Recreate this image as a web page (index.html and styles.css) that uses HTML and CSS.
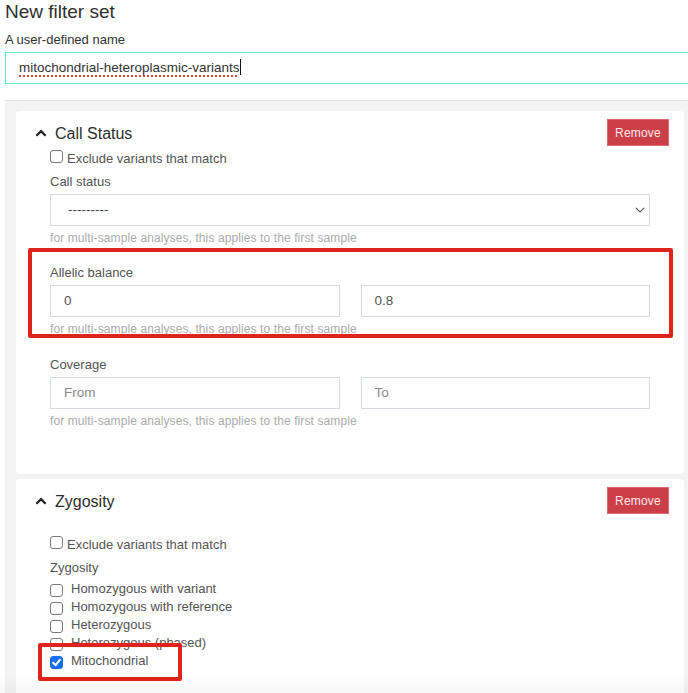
FILE: index.html
```html
<!DOCTYPE html>
<html lang="en">
<head>
<meta charset="utf-8">
<title>New filter set</title>
<link rel="stylesheet" href="styles.css">
</head>
<body>
<div class="page">
  <h1 class="title">New filter set</h1>
  <div class="name-label">A user-defined name</div>
  <div class="name-input"><span class="spell">mitochondrial-heteroplasmic-variants</span><span class="caret"></span></div>

  <div class="panel">
    <section class="card card-status">
      <div class="card-head">
        <svg class="chev" width="12" height="8" viewBox="0 0 12 8"><polyline points="1.4,6.8 6,2.2 10.6,6.8" fill="none" stroke="#222" stroke-width="2.3"/></svg>
        <h2 class="card-title">Call Status</h2>
        <button class="remove" type="button">Remove</button>
      </div>
      <div class="card-body">
        <div class="check exclude exclude-top"><span class="box"></span><span>Exclude variants that match</span></div>

        <div class="group group-1">
          <div class="flabel">Call status</div>
          <div class="field select">
            <span>---------</span>
            <svg class="select-chev" width="10" height="6" viewBox="0 0 10 6"><polyline points="0.8,0.8 5,5 9.2,0.8" fill="none" stroke="#555" stroke-width="1.2"/></svg>
          </div>
          <div class="help">for multi-sample analyses, this applies to the first sample</div>
        </div>

        <div class="group group-2">
          <div class="flabel">Allelic balance</div>
          <div class="pair">
            <div class="field value">0</div>
            <div class="field value">0.8</div>
          </div>
          <div class="help">for multi-sample analyses, this applies to the first sample</div>
        </div>

        <div class="group group-3">
          <div class="flabel">Coverage</div>
          <div class="pair">
            <div class="field placeholder">From</div>
            <div class="field placeholder">To</div>
          </div>
          <div class="help">for multi-sample analyses, this applies to the first sample</div>
        </div>
      </div>
    </section>

    <section class="card card-zyg">
      <div class="card-head">
        <svg class="chev" width="12" height="8" viewBox="0 0 12 8"><polyline points="1.4,6.8 6,2.2 10.6,6.8" fill="none" stroke="#222" stroke-width="2.3"/></svg>
        <h2 class="card-title">Zygosity</h2>
        <button class="remove" type="button">Remove</button>
      </div>
      <div class="card-body">
        <div class="check exclude exclude-zyg"><span class="box"></span><span>Exclude variants that match</span></div>
        <div class="flabel zyg-label">Zygosity</div>
        <div class="options">
          <div class="check opt"><span class="box"></span><span>Homozygous with variant</span></div>
          <div class="check opt"><span class="box"></span><span>Homozygous with reference</span></div>
          <div class="check opt"><span class="box"></span><span>Heterozygous</span></div>
          <div class="check opt"><span class="box"></span><span>Heterozygous (phased)</span></div>
          <div class="check opt"><span class="box checked"><svg width="13" height="13" viewBox="0 0 13 13"><polyline points="3.2,6.8 5.6,9.2 9.8,3.8" fill="none" stroke="#fff" stroke-width="2" stroke-linecap="round" stroke-linejoin="round"/></svg></span><span>Mitochondrial</span></div>
        </div>
      </div>
    </section>
  </div>

  <div class="annot annot-1"></div>
  <div class="annot annot-2"></div>
</div>
<div class="fade"></div>
</body>
</html>
```

FILE: styles.css
```css
html, body {
  margin: 0;
  padding: 0;
  background: #ffffff;
  overflow: hidden;
}

body {
  font-family: "Liberation Sans", Arial, sans-serif;
  color: #333;
}

.page {
  position: relative;
  width: 690px;
  padding-left: 5px;
}

.title {
  margin: 0;
  padding-top: 1px;
  font-size: 19px;
  line-height: 22px;
  font-weight: 400;
  color: #2f2f2f;
}

.name-label {
  margin-top: 9px;
  font-size: 13px;
  line-height: 16px;
  color: #333;
}

.name-input {
  margin-top: 4px;
  box-sizing: border-box;
  height: 32px;
  width: 700px;
  border: 1px solid #66efc8;
  padding-left: 13px;
  font-size: 13.5px;
  line-height: 30px;
  color: #333;
  white-space: nowrap;
}

.spell {
  text-decoration: underline dotted #e2463f;
  text-decoration-thickness: 1.5px;
  text-underline-offset: 3px;
}

.caret {
  display: inline-block;
  width: 1px;
  height: 16px;
  background: #111;
  vertical-align: -3px;
}

.panel {
  margin-top: 16px;
  border-top: 1px solid #e3e3e3;
  background: #f3f3f3;
  padding: 10px 11px 0 11px;
}

.card {
  background: #fff;
  border-radius: 4px;
}

.card-zyg {
  margin-top: 5px;
  padding-bottom: 40px;
}

.card-status {
  padding-bottom: 45px;
}

.card-head {
  display: flex;
  align-items: center;
  padding: 8px 15px 0 19px;
}

.chev {
  display: block;
  margin-right: 8px;
}

.card-title {
  margin: 2px 0 0 0;
  font-size: 16px;
  line-height: 20px;
  font-weight: 400;
  color: #2d2d2d;
}

.remove {
  margin-left: auto;
  box-sizing: border-box;
  width: 62px;
  height: 27px;
  padding: 0;
  border: 1px solid #dc6a72;
  background: #cd3f48;
  color: #fde9eb;
  font-family: "Liberation Sans", Arial, sans-serif;
  font-size: 12px;
  letter-spacing: 0.2px;
}

.card-body {
  padding: 0 34px;
}

.check {
  display: flex;
  align-items: flex-start;
  font-size: 13px;
  line-height: 18px;
  color: #555;
}

.box {
  box-sizing: border-box;
  flex: none;
  width: 13px;
  height: 13px;
  border: 1px solid #7a7a7a;
  border-radius: 3px;
  background: #fff;
}

.box.checked {
  border-color: #1570ef;
  background: #1570ef;
  position: relative;
}

.box.checked svg {
  position: absolute;
  left: -1px;
  top: -1px;
}

.exclude {
  gap: 4px;
}

.exclude .box {
  margin-top: 0;
}

.exclude-top {
  margin-top: 4px;
}

.exclude-zyg {
  margin-top: 22px;
}

.flabel {
  font-size: 13px;
  line-height: 16px;
  color: #555;
}

.group-1 {
  margin-top: 6px;
}

.group-2 {
  margin-top: 19px;
}

.group-3 {
  margin-top: 20px;
}

.field {
  box-sizing: border-box;
  height: 32px;
  margin-top: 4px;
  border: 1px solid #d6dbe2;
  background: #fff;
  line-height: 30px;
  font-size: 13.5px;
}

.select {
  display: flex;
  align-items: center;
  justify-content: space-between;
  padding: 0 4px 0 17px;
  color: #444;
}

.select-chev {
  display: block;
}

.pair {
  display: grid;
  grid-template-columns: 1fr 1fr;
  column-gap: 21px;
}

.value {
  padding-left: 13px;
  color: #555;
}

.placeholder {
  padding-left: 13px;
  color: #8a8a8a;
}

.help {
  margin-top: 4px;
  font-size: 12px;
  line-height: 16px;
  letter-spacing: 0.1px;
  color: #ababab;
}

.zyg-label {
  margin-top: 6px;
}

.options {
  margin-top: 4px;
}

.opt {
  gap: 8px;
}

.opt .box {
  margin-top: 4px;
}

.annot {
  position: absolute;
  box-sizing: border-box;
  border: 4px solid #e0231b;
  border-radius: 2px;
}

.annot-1 {
  left: 28px;
  top: 248px;
  width: 645px;
  height: 90px;
}

.annot-2 {
  left: 38px;
  top: 643px;
  width: 144px;
  height: 38px;
}

.fade {
  position: fixed;
  left: 0;
  right: 0;
  bottom: 0;
  height: 18px;
  background: linear-gradient(rgba(0,0,0,0), rgba(0,0,0,0.03));
  pointer-events: none;
}
```
